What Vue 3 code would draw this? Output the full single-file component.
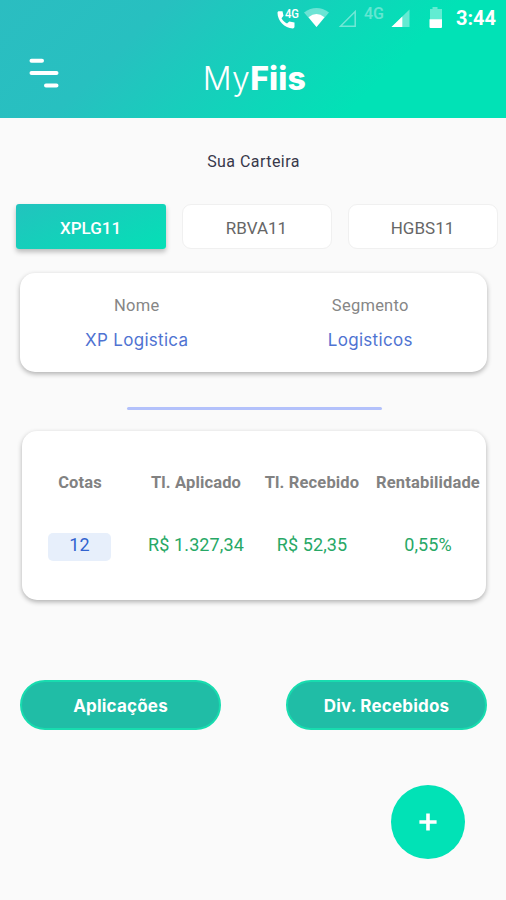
<script setup>
const tabs = [
  { code: 'XPLG11', active: true },
  { code: 'RBVA11', active: false },
  { code: 'HGBS11', active: false },
]
const details = [
  { label: 'Nome', value: 'XP Logistica', cls: 'name' },
  { label: 'Segmento', value: 'Logisticos', cls: 'segment' },
]
const stats = [
  { label: 'Cotas', value: '12', cls: 'quota' },
  { label: 'Tl. Aplicado', value: 'R$ 1.327,34', cls: 'applied' },
  { label: 'Tl. Recebido', value: 'R$ 52,35', cls: 'received' },
  { label: 'Rentabilidade', value: '0,55%', cls: 'yield' },
]
</script>

<template>
  <div class="screen">
    <header class="header">
      <div class="status">
        <svg class="status-icons" width="180" height="36" viewBox="266 0 180 36">
          <path d="M279 11.2h3.500l1 4.600-2 2.400c1.400 2.600 3 4 5.500 5.200l2.300-2 5.200 1.200v4c0 1-.6 1.800-1.700 1.800C284.500 28.200 277.500 20.800 277.500 12.800c0-1 .5-1.600 1.500-1.600z" fill="#fff" />
          <text x="285" y="18" class="call-net" textLength="14" lengthAdjust="spacingAndGlyphs">4G</text>
          <path d="M304 12.400Q316.500 3.500 329 12.400L316.500 27z" fill="#fff" opacity=".38" />
          <path d="M308.500 17.200Q316.500 10.800 324.500 17.200L316.500 27z" fill="#fff" />
          <path d="M340.500 26.200L355.200 11.500V26.200z" fill="none" stroke="#fff" stroke-width="1.500" opacity=".42" />
          <text x="364" y="19" class="dim-net" textLength="20" lengthAdjust="spacingAndGlyphs">4G</text>
          <path d="M391.500 27L409.500 9.500V27z" fill="#fff" opacity=".38" />
          <path d="M391.500 27L402.300 16.500V27z" fill="#fff" />
          <path d="M430 9h2.500V7h5v2h4.500v11h-12z" fill="#fff" opacity=".38" />
          <path d="M429.500 19.200h12.500V27q0 1-1 1h-10.500q-1 0-1-1z" fill="#fff" />
        </svg>
        <span class="clock">3:44</span>
      </div>
      <div class="bar">
        <svg class="menu" width="30" height="30" viewBox="0 0 30 30" fill="none" stroke="#fff" stroke-width="4" stroke-linecap="round">
          <path d="M2.500 2.800H13M2.500 15.100H27.500M17 27.400H27.500" />
        </svg>
        <h1 class="logo"><span class="my">My</span><span class="fiis">Fiis</span></h1>
      </div>
    </header>

    <h2 class="title"><span>Sua Carteira</span></h2>

    <nav class="tabs">
      <button v-for="t in tabs" :key="t.code" class="tab" :class="{ active: t.active }">{{ t.code }}</button>
    </nav>

    <section class="card info">
      <div v-for="d in details" :key="d.label" class="detail">
        <span class="label">{{ d.label }}</span>
        <span class="value" :class="d.cls">{{ d.value }}</span>
      </div>
    </section>

    <hr class="divider" />

    <section class="card stats">
      <div v-for="s in stats" :key="s.label" class="stat">
        <span class="head">{{ s.label }}</span>
        <span class="amount" :class="s.cls">{{ s.value }}</span>
      </div>
    </section>

    <div class="actions">
      <button class="pill apply">Aplicações</button>
      <button class="pill recv">Div. Recebidos</button>
    </div>

    <div class="fab-row">
      <button class="fab">
        <svg width="18" height="18" viewBox="0 0 18 18" stroke="#fff" stroke-width="3.600"><path d="M9 .4V17.600M.4 9H17.600" /></svg>
      </button>
    </div>
  </div>
</template>

<style>
body { background: #fafafa; }
</style>

<style scoped>
.screen {
  height: 900px;
  overflow: hidden;
  background: #fafafa;
  font-family: Roboto, sans-serif;
  display: flex;
  flex-direction: column;
}
button { border: 0; padding: 0; font: inherit; }
.header {
  height: 118px;
  flex: none;
  background: linear-gradient(135deg, #2bbdc1 0%, #27c0c0 27%, #01e2b6 74%, #01e2b6 100%);
}
.status {
  height: 36px;
  display: flex;
  justify-content: flex-end;
  padding-right: 10px;
}
.status-icons { display: block; }
.call-net, .dim-net { font-family: Roboto, sans-serif; fill: #fff; }
.call-net { font-size: 13px; font-weight: 500; }
.dim-net { font-size: 16px; font-weight: 500; opacity: .36; }
.clock {
  width: 50px;
  text-align: right;
  font-size: 20px;
  font-weight: 700;
  line-height: 37px;
  color: #fff;
}
.bar {
  display: grid;
  grid-template-columns: 30px 1fr 30px;
  align-items: start;
  padding: 22px 26px 0 29px;
}
.logo {
  margin: 0;
  text-align: center;
  font: 300 32px/41px Inter, sans-serif;
  color: #fff;
}
.my { letter-spacing: .3px; }
.fiis { font-weight: 800; letter-spacing: .2px; }
.title {
  margin: 33px 0 0;
  text-align: center;
  font-size: 16px;
  line-height: 22px;
  height: 20px;
  font-weight: 400;
  letter-spacing: .45px;
  color: #38384a;
  padding-left: 1px;
}
.tabs {
  display: grid;
  grid-template-columns: repeat(3, 150px);
  gap: 16px;
  margin: 33px 0 0 15.500px;
}
.tab {
  height: 45px;
  box-sizing: border-box;
  border-radius: 9px;
  background: #fff;
  border: 1px solid #f0f0f0;
  font-size: 17px;
  padding-top: 2px;
  color: #666;
}
.tab.active {
  border: 0;
  border-radius: 3px;
  color: #fff;
  font-weight: 500;
  background: linear-gradient(155deg, #22c3be, #04e0b6);
  box-shadow: 0 3px 5px rgba(0, 0, 0, .25);
}
.card {
  background: #fff;
  border-radius: 15px;
  box-shadow: 0 2px 5px rgba(0, 0, 0, .3);
  display: grid;
}
.info {
  margin: 24px 19px 0 20px;
  height: 99px;
  box-sizing: border-box;
  padding-top: 22px;
  grid-template-columns: 1fr 1fr;
}
.detail, .stat { display: flex; flex-direction: column; align-items: center; }
.label { font-size: 16.500px; line-height: 21px; color: #868686; letter-spacing: .25px; }
.value { margin-top: 14px; font: 400 17px/20px Inter, sans-serif; letter-spacing: .3px; color: #4f73d2; }
.divider {
  width: 255px;
  height: 3px;
  border: 0;
  border-radius: 2px;
  background: #b3c1fb;
  margin: 35px 0 0 127px;
}
.stats {
  margin: 21px 20px 0 22px;
  height: 169px;
  box-sizing: border-box;
  padding-top: 42px;
  grid-template-columns: repeat(4, 116px);
  align-content: start;
}
.head { font-size: 16.500px; line-height: 20px; font-weight: 700; letter-spacing: .15px; color: #828282; white-space: nowrap; }
.amount { margin-top: 40px; height: 28px; line-height: 24px; font-size: 18px; letter-spacing: .1px; color: #27a866; white-space: nowrap; }
.quota { width: 63px; margin-right: 1px; border-radius: 5px; background: #e7effb; color: #3263cf; text-align: center; }
.actions { display: flex; justify-content: space-between; padding: 80px 19px 0 20px; }
.pill {
  width: 201px;
  height: 50px;
  box-sizing: border-box;
  border: 2px solid #18dcaf;
  border-radius: 25px;
  background: #20bda6;
  color: #fff;
  font: 700 17px Inter, sans-serif;
  letter-spacing: .2px;
  padding-top: 2px;
}
.fab-row { display: flex; justify-content: flex-end; padding: 55px 41px 0 0; }
.fab {
  width: 74px;
  height: 74px;
  border-radius: 50%;
  background: #01e2b6;
  display: grid;
  place-items: center;
}
</style>
